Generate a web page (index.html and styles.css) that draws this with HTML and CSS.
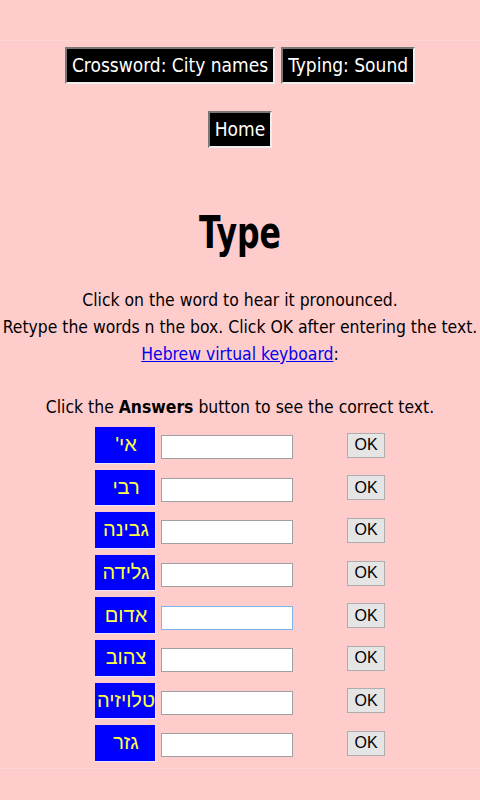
FILE: index.html
```html
<!DOCTYPE html>
<html lang="en">

<head>
    <meta charset="UTF-8">
    <meta name="viewport" content="width=device-width, initial-scale=1.0">
    <title>Type - Hebrew words</title>
    <link rel="stylesheet" href="styles.css">
</head>

<body>
    <div class="page">
        <div class="nav">
            <a class="navbtn" href="#">Crossword: City names</a>
            <a class="navbtn" href="#">Typing: Sound</a>
        </div>
        <div class="nav home">
            <a class="navbtn" href="#">Home</a>
        </div>

        <h1>Type</h1>

        <p class="intro">
            Click on the word to hear it pronounced.<br>
            Retype the words n the box. Click OK after entering the text.<br>
            <a href="#">Hebrew virtual keyboard</a>:
        </p>

        <p class="hint">Click the <b>Answers</b> button to see the correct text.</p>

        <table class="words">
            <tr>
                <td class="word" dir="rtl">אי'</td>
                <td class="entry"><input type="text"></td>
                <td class="ok"><button>OK</button></td>
            </tr>
            <tr>
                <td class="word" dir="rtl">רבי</td>
                <td class="entry"><input type="text"></td>
                <td class="ok"><button>OK</button></td>
            </tr>
            <tr>
                <td class="word" dir="rtl">גבינה</td>
                <td class="entry"><input type="text"></td>
                <td class="ok"><button>OK</button></td>
            </tr>
            <tr>
                <td class="word" dir="rtl">גלידה</td>
                <td class="entry"><input type="text"></td>
                <td class="ok"><button>OK</button></td>
            </tr>
            <tr>
                <td class="word" dir="rtl">אדום</td>
                <td class="entry"><input type="text" class="focus"></td>
                <td class="ok"><button>OK</button></td>
            </tr>
            <tr>
                <td class="word" dir="rtl">צהוב</td>
                <td class="entry"><input type="text"></td>
                <td class="ok"><button>OK</button></td>
            </tr>
            <tr>
                <td class="word" dir="rtl">טלויזיה</td>
                <td class="entry"><input type="text"></td>
                <td class="ok"><button>OK</button></td>
            </tr>
            <tr>
                <td class="word" dir="rtl">גזר</td>
                <td class="entry"><input type="text"></td>
                <td class="ok"><button>OK</button></td>
            </tr>
        </table>
    </div>
</body>

</html>
```

FILE: styles.css
```css
body {
    font-family: "DejaVu Sans Condensed", "DejaVu Sans", sans-serif;
    background-color: #ffcccc;
    margin: 0;
    padding: 0;
    color: #000;
}

.page {
    margin-top: 40px;
    border-top: 1px solid #ffd4d4;
    border-bottom: 1px solid #ffd4d4;
    padding-top: 6px;
    text-align: center;
}

.nav {
    display: flex;
    justify-content: center;
    gap: 6px;
}

.nav.home {
    margin-top: 27px;
}

.navbtn {
    display: inline-block;
    background-color: #000;
    color: #fff;
    text-decoration: none;
    font-family: "DejaVu Sans Condensed", sans-serif;
    font-size: 19px;
    line-height: 33px;
    height: 33px;
    padding: 0 5px;
    border: 2px solid;
    border-color: #777 #eee #eee #777;
}

h1 {
    font-size: 45px;
    font-family: "DejaVu Sans Condensed", sans-serif;
    margin: 60px 0 0;
    line-height: 50px;
    transform: scaleX(0.78);
}

.intro {
    font-size: 17.4px;
    line-height: 27px;
    margin: 29px 0 0;
    white-space: nowrap;
}

.intro a {
    color: #0000ee;
}

.hint {
    font-size: 17.4px;
    line-height: 27px;
    margin: 26px 0 0;
}

.words {
    margin: 0 auto;
    border-collapse: separate;
    border-spacing: 5px 6px;
    width: 300px;
}

.words td {
    padding: 0;
    vertical-align: middle;
}

td.word {
    width: 60px;
    height: 35.6px;
    background-color: #0000ff;
    color: #ffff44;
    font-family: "Liberation Sans", Arial, sans-serif;
    font-size: 20px;
    text-align: center;
    border-right: 1px solid #e8e8ff;
    border-bottom: 1px solid #e8e8ff;
}

td.entry {
    text-align: left;
}

input {
    width: 132px;
    height: 24px;
    box-sizing: border-box;
    border: 1px solid #a0a0a0;
    background: #fff;
    margin-top: 4px;
}

input.focus {
    border-color: #7eb4ea;
}

td.ok {
    text-align: right;
}

button {
    font-family: "Liberation Sans", Arial, sans-serif;
    font-size: 16px;
    width: 38px;
    height: 25px;
    padding: 0;
    border: 1px solid #adadad;
    background-color: #e5e5e5;
    color: #000;
}
```
